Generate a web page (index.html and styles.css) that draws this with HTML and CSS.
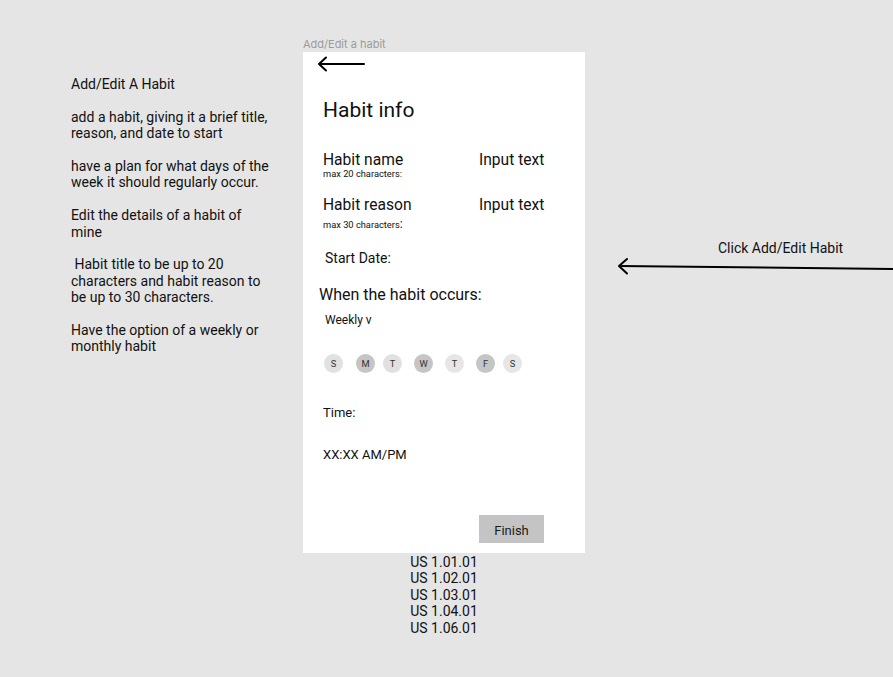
FILE: index.html
```html
<!DOCTYPE html>
<html>
<head>
<meta charset="utf-8">
<link rel="stylesheet" href="styles.css">
</head>
<body>
<div class="canvas">
  <div class="notes">
    <p>Add/Edit A Habit</p>
    <p>add a habit, giving it a brief title, reason, and date to start</p>
    <p>have a plan for what days of the week it should regularly occur.</p>
    <p>Edit the details of a habit of mine</p>
    <p>&nbsp;Habit title to be up to 20 characters and habit reason to be up to 30 characters.</p>
    <p>Have the option of a weekly or monthly habit</p>
  </div>

  <div class="frame-col">
    <div class="frame-label">Add/Edit a habit</div>
    <div class="frame">
      <svg class="back" width="50" height="16" viewBox="0 0 50 16">
        <path d="M3 8 H48 M10 1.5 L3 8 L10 14.5" fill="none" stroke="#000" stroke-width="2" stroke-linecap="round" stroke-linejoin="round"/>
      </svg>
      <h1 class="title">Habit info</h1>

      <div class="field field-name">
        <div class="field-main">
          <span class="field-label">Habit name</span>
          <span class="field-input">Input text</span>
        </div>
        <div class="field-hint name-hint">max 20 characters:</div>
      </div>

      <div class="field field-reason">
        <div class="field-main">
          <span class="field-label">Habit reason</span>
          <span class="field-input">Input text</span>
        </div>
        <div class="field-hint hint-gap">max 30 characters<span class="big-colon">:</span></div>
      </div>

      <div class="start-date">Start Date:</div>
      <div class="occurs">When the habit occurs:</div>
      <div class="weekly">Weekly v</div>

      <div class="days">
        <span class="day light">S</span>
        <span class="day dark">M</span>
        <span class="day light">T</span>
        <span class="day dark">W</span>
        <span class="day lighter">T</span>
        <span class="day dark">F</span>
        <span class="day lighter">S</span>
      </div>

      <div class="time">Time:</div>
      <div class="time-value">XX:XX AM/PM</div>

      <div class="actions">
        <button class="finish">Finish</button>
      </div>
    </div>
    <div class="stories">
      <div>US 1.01.01</div>
      <div>US 1.02.01</div>
      <div>US 1.03.01</div>
      <div>US 1.04.01</div>
      <div>US 1.06.01</div>
    </div>
  </div>

  <div class="annotation">
    <div class="annotation-text">Click Add/Edit Habit</div>
    <svg class="annotation-arrow" width="275" height="20" viewBox="0 0 275 20">
      <path d="M1 8 L276 11" fill="none" stroke="#000" stroke-width="2"/>
      <path d="M9 1 L1 8 L9 15.5" fill="none" stroke="#000" stroke-width="2" stroke-linecap="round" stroke-linejoin="round"/>
    </svg>
  </div>
</div>
</body>
</html>
```

FILE: styles.css
```css
html, body {
  margin: 0;
  padding: 0;
  background: #e5e5e5;
  font-family: Roboto, "Liberation Sans", sans-serif;
  color: #111;
}

.canvas {
  width: 893px;
  height: 677px;
  display: flex;
  align-items: flex-start;
  padding-left: 71px;
  box-sizing: border-box;
  overflow: hidden;
}

.notes {
  width: 202px;
  margin-right: 30px;
  margin-top: 76px;
  font-size: 14px;
  line-height: 16.4px;
}

.notes p {
  margin: 0 0 16.4px 0;
}

.frame-col {
  width: 282px;
  margin-top: 37px;
  display: flex;
  flex-direction: column;
}

.frame-label {
  font-family: Inter, Roboto, sans-serif;
  font-size: 11px;
  line-height: 15px;
  color: #9b9b9b;
}

.frame {
  background: #fff;
  height: 501px;
  display: flex;
  flex-direction: column;
  padding-left: 20px;
  box-sizing: border-box;
}

.back {
  display: block;
  margin-left: -7px;
  margin-top: 4px;
}

.title {
  margin: 26px 0 0 0;
  font-size: 21px;
  font-weight: 400;
  line-height: 25px;
}

.field-main {
  display: flex;
  font-size: 15.6px;
  line-height: 16px;
}

.field-label {
  width: 156px;
}

.field-name {
  margin-top: 28.5px;
}

.field-reason {
  margin-top: 18px;
}

.field-hint {
  font-size: 9.3px;
  line-height: 10px;
}

.name-hint {
  margin-top: 1.5px;
}

.hint-gap {
  margin-top: 7px;
}

.big-colon {
  font-size: 12px;
  line-height: 8px;
}

.start-date {
  margin-top: 20px;
  margin-left: 2px;
  font-size: 14px;
  line-height: 16px;
}

.occurs {
  margin-top: 20px;
  margin-left: -4px;
  font-size: 16px;
  line-height: 18px;
}

.weekly {
  margin-top: 9px;
  margin-left: 2px;
  font-size: 12px;
  line-height: 14px;
}

.days {
  display: flex;
  margin-top: 27px;
  margin-left: 1px;
}

.day {
  width: 19px;
  height: 19px;
  border-radius: 50%;
  display: flex;
  align-items: center;
  justify-content: center;
  font-size: 9.3px;
  color: #333;
}

.day.light { background: #e1e1e1; }
.day.lighter { background: #e6e6e6; }
.day.dark { background: #c5c5c5; }

.day:nth-child(2) { margin-left: 13px; }
.day:nth-child(3) { margin-left: 8px; }
.day:nth-child(4) { margin-left: 12px; }
.day:nth-child(5) { margin-left: 12px; }
.day:nth-child(6) { margin-left: 12px; }
.day:nth-child(7) { margin-left: 8px; }

.time {
  margin-top: 32px;
  font-size: 13px;
  line-height: 15px;
}

.time-value {
  margin-top: 27px;
  font-size: 13px;
  line-height: 15px;
}

.actions {
  display: flex;
  margin-top: 52.5px;
  padding-left: 156px;
}

.finish {
  width: 65px;
  height: 28px;
  border: none;
  background: #c4c4c4;
  font-family: Roboto, "Liberation Sans", sans-serif;
  font-size: 13px;
  color: #1a1a1a;
  padding: 3px 0 0 0;
  margin: 0;
}

.stories {
  text-align: center;
  font-size: 14px;
  line-height: 16.5px;
  margin-top: 0.5px;
}

.annotation {
  margin-left: 33px;
  margin-top: 240px;
  width: 275px;
  display: flex;
  flex-direction: column;
}

.annotation-text {
  font-size: 14px;
  line-height: 16px;
  padding-left: 100px;
}

.annotation-arrow {
  display: block;
  margin-top: 2px;
  overflow: visible;
}
```
